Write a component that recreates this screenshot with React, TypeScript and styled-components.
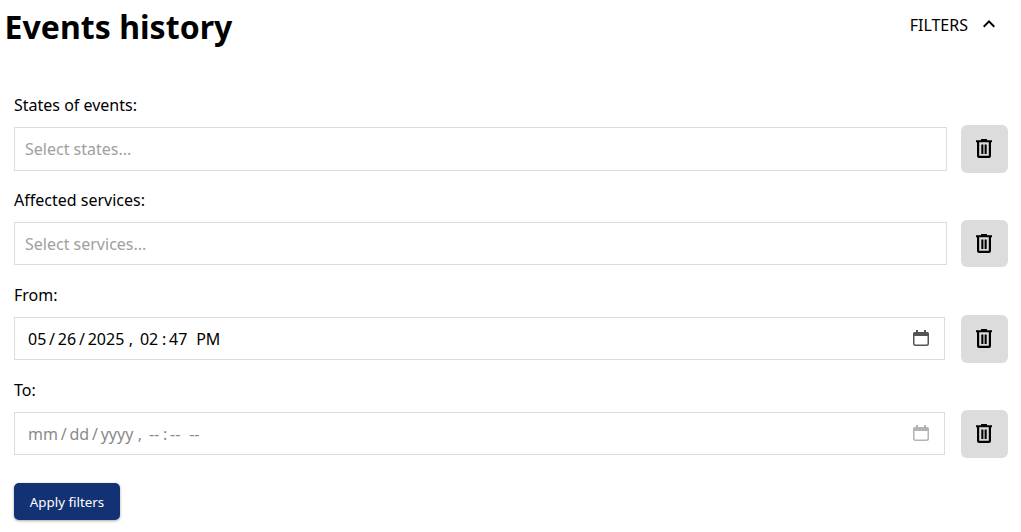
import { FC } from "react";
import styled, { createGlobalStyle } from "styled-components";

const GlobalStyle = createGlobalStyle`
  html, body {
    margin: 0;
    padding: 0;
    background: #fff;
    color: #000;
    font-family: "Noto Sans", sans-serif;
  }
`;

const TrashIcon: FC = () => (
  <svg width="16" height="19" viewBox="0 0 16 19" fill="currentColor">
    <path
      fillRule="evenodd"
      d="M5 0h6v1.2h5v2h-1V17a2 2 0 0 1-2 2H3a2 2 0 0 1-2-2V3.2H0v-2h5V0zM3.200 3.200V16.800h9.600V3.200H3.200zM5.300 5.500h2.100v9.500H5.300v-9.500zm3.300 0h2.100v9.500H8.600v-9.500z"
    />
  </svg>
);

const ChevronUp: FC = () => (
  <svg width="24" height="24" viewBox="0 0 24 24" fill="currentColor">
    <path d="M12 8l-6 6 1.41 1.41L12 10.83l4.59 4.58L18 14z" />
  </svg>
);

const CalendarGlyph: FC<{ className?: string }> = ({ className }) => (
  <svg className={className} width="16" height="16" viewBox="0 0 16 16">
    <path d="M3 0h2v2h6V0h2v2h1.500A1.500 1.500 0 0 1 16 3.500V6H0V3.500A1.500 1.500 0 0 1 1.500 2H3V0z" fill="currentColor" />
    <path d="M.75 5v8.500c0 1 .75 1.750 1.750 1.750h11c1 0 1.750-.75 1.750-1.750V5" fill="none" stroke="currentColor" strokeWidth="1.500" />
  </svg>
);

const App: FC = () => {
  return (
    <Page>
      <GlobalStyle />
      <Header>
        <Title>Events history</Title>
        <Toggle type="button">
          <ToggleText>FILTERS</ToggleText>
          <ChevronUp />
        </Toggle>
      </Header>
      <Form>
        <Field>
          <Label>States of events:</Label>
          <Row>
            <TextInput placeholder="Select states..." readOnly />
            <ClearButton type="button">
              <TrashIcon />
            </ClearButton>
          </Row>
        </Field>
        <Field>
          <Label>Affected services:</Label>
          <Row>
            <TextInput placeholder="Select services..." readOnly $short />
            <ClearButton type="button" $short>
              <TrashIcon />
            </ClearButton>
          </Row>
        </Field>
        <Field>
          <Label>From:</Label>
          <Row>
            <DateWrap>
              <DateInput type="datetime-local" defaultValue="2025-05-26T14:47" />
              <CalendarIcon />
            </DateWrap>
            <ClearButton type="button">
              <TrashIcon />
            </ClearButton>
          </Row>
        </Field>
        <Field>
          <Label>To:</Label>
          <Row>
            <DateWrap>
              <DateInput type="datetime-local" $empty />
              <CalendarIcon $empty />
            </DateWrap>
            <ClearButton type="button">
              <TrashIcon />
            </ClearButton>
          </Row>
        </Field>
        <ApplyButton type="button">Apply filters</ApplyButton>
      </Form>
    </Page>
  );
};

const Page = styled.div`
  width: 1021px;
  height: 532px;
  overflow: hidden;
`;

const Header = styled.div`
  display: flex;
  align-items: flex-start;
  justify-content: space-between;
  padding: 5px 20px 0 4.5px;
  height: 91px;
  box-sizing: border-box;
`;

const Title = styled.h1`
  margin: 0;
  font-size: 32px;
  line-height: 44px;
  font-weight: 700;
  letter-spacing: 0.04px;
`;

const Toggle = styled.button`
  display: flex;
  align-items: flex-start;
  gap: 9px;
  margin-top: 7px;
  padding: 0;
  border: none;
  background: none;
  color: #000;
  font-family: inherit;
  font-size: 16px;
  line-height: 24px;
`;

const ToggleText = styled.span`
  padding-top: 1px;
`;

const Form = styled.form`
  display: flex;
  flex-direction: column;
  align-items: flex-start;
  padding: 0 13px 0 14px;
`;

const Field = styled.div`
  width: 100%;
  height: 95px;
`;

const Label = styled.label`
  display: block;
  font-size: 16px;
  line-height: 22px;
  margin-bottom: 9px;
  padding-top: 3px;
`;

const Row = styled.div`
  display: flex;
  align-items: flex-start;
  justify-content: space-between;
`;

const TextInput = styled.input<{ $short?: boolean }>`
  box-sizing: border-box;
  width: 933px;
  height: ${({ $short }) => ($short ? "43px" : "44px")};
  margin-top: 2px;
  padding: 0 10px;
  border: 1px solid #ddd;
  background: #fff;
  font-family: inherit;
  font-size: 16px;
  outline: none;

  &::placeholder {
    color: #a0a0a0;
    opacity: 1;
  }
`;

const DateWrap = styled.div`
  position: relative;
  width: 931px;
  height: 43px;
  margin-top: 2px;
`;

const DateInput = styled.input<{ $empty?: boolean }>`
  box-sizing: border-box;
  width: 100%;
  height: 100%;
  padding: 0 12px;
  border: 1px solid #ddd;
  background: #fff;
  color: ${({ $empty }) => ($empty ? "#8a8a8a" : "#000")};
  font-family: inherit;
  font-size: 16px;
  outline: none;

  &::-webkit-datetime-edit-text {
    padding: 0 1.8px;
  }

  &::-webkit-datetime-edit-year-field {
    margin-right: 1.5px;
  }

  &::-webkit-datetime-edit-hour-field {
    margin-right: 1px;
  }

  &::-webkit-datetime-edit-ampm-field {
    margin-left: 0.5px;
  }

  &::-webkit-calendar-picker-indicator {
    opacity: 0;
  }
`;

const CalendarIcon = styled(CalendarGlyph)<{ $empty?: boolean }>`
  position: absolute;
  top: 13px;
  right: 16px;
  pointer-events: none;
  color: ${({ $empty }) => ($empty ? "#b4b4b4" : "#555")};
`;

const ClearButton = styled.button<{ $short?: boolean }>`
  display: flex;
  align-items: center;
  justify-content: center;
  flex: none;
  width: 47px;
  height: ${({ $short }) => ($short ? "47px" : "48px")};
  margin-left: auto;
  padding: 0 1px 1px 0;
  border: none;
  border-radius: 6px;
  background: #dcdcdc;
  color: #000;
`;

const ApplyButton = styled.button`
  width: 106px;
  height: 37px;
  margin-top: 12px;
  padding: 0;
  border: none;
  border-radius: 5px;
  background: #133273;
  color: #fff;
  font-family: inherit;
  font-size: 13.33px;
  box-shadow: 0 1px 3px rgba(0, 0, 0, 0.35);
`;

export default App;
